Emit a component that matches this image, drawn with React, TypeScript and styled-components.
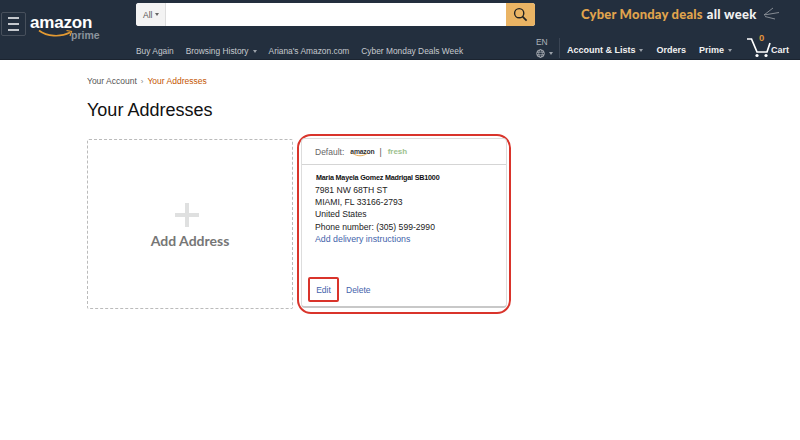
import { createGlobalStyle } from 'styled-components';
import styled from 'styled-components';

const GlobalStyle = createGlobalStyle`
  html, body {
    margin: 0;
    padding: 0;
    background: #fff;
    font-family: 'Liberation Sans', Arial, sans-serif;
  }
  * { box-sizing: border-box; }
`;

const S = {
  Page: styled.div`
    width: 800px;
    height: 440px;
    overflow: hidden;
    background: #fff;
  `,
  Header: styled.header`
    display: flex;
    height: 60px;
    background: #232f3e;
    border-bottom: 1px solid #1b2430;
  `,
  Brand: styled.div`
    display: flex;
    align-items: flex-start;
    gap: 4px;
    width: 136px;
    padding: 12px 0 0 1px;
    flex-shrink: 0;
  `,
  MenuButton: styled.div`
    display: flex;
    flex-direction: column;
    justify-content: center;
    gap: 4px;
    width: 25px;
    height: 24px;
    padding: 0 6px;
    border: 1px solid #47505c;
    border-radius: 2px;
  `,
  MenuLine: styled.span`
    display: block;
    height: 2px;
    background: #c4c8cd;
  `,
  Logo: styled.div`
    position: relative;
    width: 72px;
    height: 34px;
  `,
  LogoWord: styled.div`
    margin-top: 4px;
    color: #fff;
    font-size: 17px;
    font-weight: 700;
    line-height: 14px;
    letter-spacing: -0.2px;
  `,
  LogoPrime: styled.div`
    position: absolute;
    left: 41px;
    top: 18px;
    color: #8b939c;
    font-size: 10.5px;
    font-weight: 700;
    line-height: 10px;
  `,
  LogoSmile: styled.svg`
    position: absolute;
    left: 8px;
    top: 17px;
  `,
  Main: styled.div`
    flex: 1;
    display: flex;
    flex-direction: column;
    padding-top: 3px;
    padding-right: 11px;
  `,
  TopRow: styled.div`
    display: flex;
    align-items: center;
    height: 23px;
  `,
  Search: styled.div`
    display: flex;
    width: 399px;
    height: 23px;
    border-radius: 3px;
    overflow: hidden;
    background: #fff;
  `,
  SearchScope: styled.div`
    display: flex;
    align-items: center;
    gap: 3px;
    width: 30px;
    padding-left: 7px;
    background: #f3f3f3;
    border-right: 1px solid #dddddd;
    color: #555;
    font-size: 8.5px;
  `,
  SearchInput: styled.div`
    flex: 1;
  `,
  SearchButton: styled.div`
    display: flex;
    align-items: center;
    justify-content: center;
    width: 29px;
    background: #eab464;
  `,
  Promo: styled.div`
    display: flex;
    align-items: center;
    margin-left: 46px;
    margin-top: -2px;
    font-family: 'Lato', sans-serif;
    font-size: 13px;
    font-weight: 900;
    letter-spacing: 0.2px;
    color: #e0a44d;
  `,
  PromoWhite: styled.span`
    color: #f1f1f1;
    margin-left: 4px;
    letter-spacing: 0.3px;
  `,
  PromoMark: styled.svg`
    margin-left: 5px;
  `,
  BottomRow: styled.div`
    display: flex;
    align-items: flex-end;
    justify-content: space-between;
    margin-top: 8px;
    height: 24px;
  `,
  NavLinks: styled.nav`
    display: flex;
    gap: 12px;
    padding-bottom: 1px;
  `,
  NavLink: styled.span`
    display: flex;
    align-items: center;
    gap: 4px;
    color: #c6cacf;
    font-size: 8.4px;
    line-height: 12px;
  `,
  Caret: styled.span<{ $color?: string }>`
    display: inline-block;
    width: 0;
    height: 0;
    border-left: 2.5px solid transparent;
    border-right: 2.5px solid transparent;
    border-top: 3px solid ${({ $color }) => $color ?? '#9aa1a9'};
  `,
  AccountNav: styled.div`
    display: flex;
    align-items: flex-end;
  `,
  Language: styled.div`
    display: flex;
    flex-direction: column;
    width: 24px;
    height: 20px;
    color: #aeb3b9;
    font-size: 8.5px;
    line-height: 9px;
    border-right: 1px solid #3a4554;
  `,
  GlobeRow: styled.div`
    display: flex;
    align-items: center;
    gap: 4px;
    margin-top: 2px;
  `,
  AccountLink: styled.span<{ $gap?: number }>`
    display: flex;
    align-items: center;
    gap: 4px;
    margin-left: ${({ $gap }) => $gap ?? 13}px;
    color: #f2f2f2;
    font-size: 9px;
    font-weight: 700;
    line-height: 13px;
    padding-bottom: 1px;
  `,
  Cart: styled.div`
    position: relative;
    display: flex;
    align-items: flex-end;
    margin-left: 14px;
  `,
  CartCount: styled.span`
    position: absolute;
    left: 13px;
    top: -5px;
    color: #e0933a;
    font-size: 9.5px;
    font-weight: 700;
    line-height: 12px;
  `,
  CartLabel: styled.span`
    color: #f2f2f2;
    font-size: 9px;
    font-weight: 700;
    line-height: 13px;
    padding-bottom: 1px;
  `,
  Content: styled.main`
    padding: 15px 0 0 87px;
  `,
  Breadcrumb: styled.div`
    display: flex;
    align-items: center;
    gap: 4px;
    height: 12px;
    font-size: 8.5px;
    color: #555;
  `,
  BreadcrumbSep: styled.span`
    color: #888;
    font-size: 8px;
  `,
  BreadcrumbCurrent: styled.span`
    color: #c45500;
  `,
  Title: styled.h1`
    margin: 10px 0 11px;
    height: 26px;
    font-size: 18px;
    font-weight: 400;
    line-height: 26px;
    color: #111;
  `,
  Cards: styled.div`
    display: flex;
    align-items: flex-start;
  `,
  AddCard: styled.div`
    display: flex;
    flex-direction: column;
    align-items: center;
    justify-content: center;
    width: 206px;
    height: 170px;
    margin-top: 5px;
    border: 1.5px dashed #bbb;
    border-radius: 2px;
  `,
  Plus: styled.svg`
    margin: 4px 6px 0 0;
  `,
  AddLabel: styled.div`
    margin-top: 5px;
    color: #767676;
    font-family: 'Lato', sans-serif;
    font-size: 14px;
    font-weight: 700;
  `,
  Highlight: styled.div`
    width: 214px;
    height: 180px;
    margin-left: 4px;
    padding: 2px 2px 4px 2px;
    border: 2px solid #d9342b;
    border-radius: 14px;
  `,
  AddressCard: styled.div`
    display: flex;
    flex-direction: column;
    height: 100%;
    border: 1px solid #dddddd;
    border-bottom: 2px solid #c8c8c8;
    border-radius: 4px;
  `,
  CardHeader: styled.div`
    display: flex;
    align-items: center;
    height: 26px;
    padding-left: 13px;
    border-bottom: 1px solid #d5d5d5;
    font-size: 8.5px;
    color: #666;
  `,
  Tag: styled.span`
    position: relative;
    margin-left: 6px;
    color: #333;
    font-weight: 700;
    font-size: 6.8px;
    letter-spacing: -0.2px;
  `,
  TagSmile: styled.svg`
    position: absolute;
    left: 2px;
    bottom: -2px;
  `,
  TagDivider: styled.span`
    margin-left: 5px;
    color: #555;
  `,
  Fresh: styled.span`
    margin-left: 6px;
    color: #9cc18e;
    font-size: 8px;
    font-weight: 700;
  `,
  CardBody: styled.div`
    flex: 1;
    padding: 7px 0 0 13px;
  `,
  AddressName: styled.div`
    padding-left: 1px;
    color: #111;
    font-size: 7.2px;
    font-weight: 700;
    letter-spacing: -0.2px;
    line-height: 12px;
  `,
  AddressLine: styled.div`
    color: #222;
    font-size: 8.6px;
    line-height: 12.2px;
  `,
  AddressLink: styled.div`
    color: #3f63ab;
    font-size: 8.8px;
    line-height: 12.2px;
  `,
  Actions: styled.div`
    display: flex;
    align-items: center;
    padding: 0 0 4px 6px;
  `,
  EditButton: styled.span`
    display: flex;
    align-items: center;
    justify-content: center;
    width: 31px;
    height: 25px;
    border: 2px solid #d9342b;
    border-radius: 2px;
    color: #3f63ab;
    font-size: 8.5px;
  `,
  DeleteButton: styled.span`
    margin-left: 7px;
    color: #3f63ab;
    font-size: 8.5px;
  `,
};

const navLinks = [
  { label: 'Buy Again' },
  { label: 'Browsing History', caret: true },
  { label: "Ariana's Amazon.com" },
  { label: 'Cyber Monday Deals Week' },
];

const addressLines = ['7981 NW 68TH ST', 'MIAMI, FL 33166-2793', 'United States', 'Phone number: (305) 599-2990'];

function App() {
  return (
    <S.Page>
      <GlobalStyle />
      <S.Header>
        <S.Brand>
          <S.MenuButton>
            <S.MenuLine />
            <S.MenuLine />
            <S.MenuLine />
          </S.MenuButton>
          <S.Logo>
            <S.LogoWord>amazon</S.LogoWord>
            <S.LogoSmile width="36" height="10" viewBox="0 0 36 10">
              <path d="M1 1.5C9 7.5 22 8.5 32 3.5" fill="none" stroke="#e39a32" strokeWidth="1.6" />
              <path d="M28.5 1.5L33.5 2.5L32 7" fill="none" stroke="#e39a32" strokeWidth="1.2" />
            </S.LogoSmile>
            <S.LogoPrime>prime</S.LogoPrime>
          </S.Logo>
        </S.Brand>
        <S.Main>
          <S.TopRow>
            <S.Search>
              <S.SearchScope>
                All <S.Caret $color="#666" />
              </S.SearchScope>
              <S.SearchInput />
              <S.SearchButton>
                <svg width="15" height="15" viewBox="0 0 15 15">
                  <circle cx="6.2" cy="6.2" r="4.6" fill="none" stroke="#222" strokeWidth="1.4" />
                  <path d="M9.6 9.6L13.6 13.6" stroke="#222" strokeWidth="1.7" />
                </svg>
              </S.SearchButton>
            </S.Search>
            <S.Promo>
              Cyber Monday deals<S.PromoWhite>all week</S.PromoWhite>
              <S.PromoMark width="18" height="14" viewBox="0 0 18 14">
                <path d="M11 1L2 8L17 5.5M3 9.5L13 12" fill="none" stroke="#9ea3a9" strokeWidth="0.8" />
              </S.PromoMark>
            </S.Promo>
          </S.TopRow>
          <S.BottomRow>
            <S.NavLinks>
              {navLinks.map((link) => (
                <S.NavLink key={link.label}>
                  {link.label}
                  {link.caret && <S.Caret />}
                </S.NavLink>
              ))}
            </S.NavLinks>
            <S.AccountNav>
              <S.Language>
                EN
                <S.GlobeRow>
                  <svg width="9" height="9" viewBox="0 0 9 9">
                    <circle cx="4.5" cy="4.5" r="3.8" fill="none" stroke="#c5c8cc" strokeWidth="0.8" />
                    <ellipse cx="4.5" cy="4.5" rx="1.8" ry="3.8" fill="none" stroke="#c5c8cc" strokeWidth="0.6" />
                    <path d="M0.8 3.2H8.2M0.8 5.8H8.2" stroke="#c5c8cc" strokeWidth="0.6" />
                  </svg>
                  <S.Caret />
                </S.GlobeRow>
              </S.Language>
              <S.AccountLink $gap={7}>
                Account &amp; Lists <S.Caret />
              </S.AccountLink>
              <S.AccountLink>Orders</S.AccountLink>
              <S.AccountLink>
                Prime <S.Caret />
              </S.AccountLink>
              <S.Cart>
                <svg width="25" height="21" viewBox="0 0 25 21">
                  <path d="M1 2H5.5L11 15H21L24 6" fill="none" stroke="#fff" strokeWidth="1.7" />
                  <circle cx="11" cy="18.5" r="1.6" fill="#fff" />
                  <circle cx="20" cy="18.5" r="1.6" fill="#fff" />
                </svg>
                <S.CartCount>0</S.CartCount>
                <S.CartLabel>Cart</S.CartLabel>
              </S.Cart>
            </S.AccountNav>
          </S.BottomRow>
        </S.Main>
      </S.Header>
      <S.Content>
        <S.Breadcrumb>
          Your Account
          <S.BreadcrumbSep>›</S.BreadcrumbSep>
          <S.BreadcrumbCurrent>Your Addresses</S.BreadcrumbCurrent>
        </S.Breadcrumb>
        <S.Title>Your Addresses</S.Title>
        <S.Cards>
          <S.AddCard>
            <S.Plus width="24" height="24" viewBox="0 0 24 24">
              <path d="M12 0V24M0 12H24" stroke="#dfe0e0" strokeWidth="4" />
            </S.Plus>
            <S.AddLabel>Add Address</S.AddLabel>
          </S.AddCard>
          <S.Highlight>
            <S.AddressCard>
              <S.CardHeader>
                Default:
                <S.Tag>
                  amazon
                  <S.TagSmile width="16" height="4" viewBox="0 0 16 4">
                    <path d="M1 0.5C5 3.5 11 3.5 15 0.5" fill="none" stroke="#e39a32" strokeWidth="0.8" />
                  </S.TagSmile>
                </S.Tag>
                <S.TagDivider>|</S.TagDivider>
                <S.Fresh>fresh</S.Fresh>
              </S.CardHeader>
              <S.CardBody>
                <S.AddressName>Maria Mayela Gomez Madrigal SB1000</S.AddressName>
                {addressLines.map((line) => (
                  <S.AddressLine key={line}>{line}</S.AddressLine>
                ))}
                <S.AddressLink>Add delivery instructions</S.AddressLink>
              </S.CardBody>
              <S.Actions>
                <S.EditButton>Edit</S.EditButton>
                <S.DeleteButton>Delete</S.DeleteButton>
              </S.Actions>
            </S.AddressCard>
          </S.Highlight>
        </S.Cards>
      </S.Content>
    </S.Page>
  );
}

export default App;
